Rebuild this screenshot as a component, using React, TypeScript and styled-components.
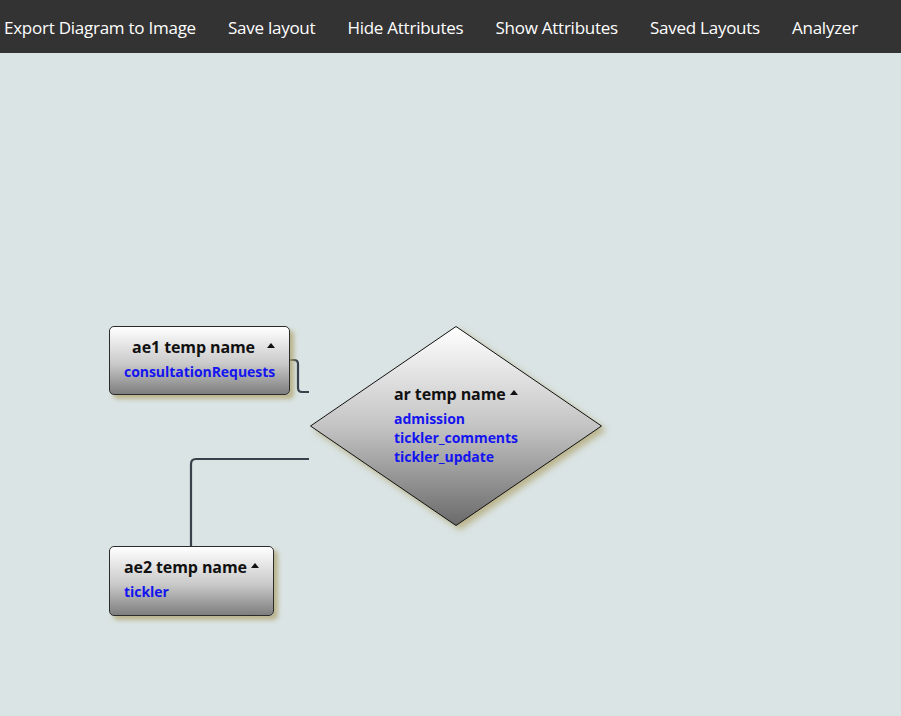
import React from "react";
import styled, { createGlobalStyle } from "styled-components";

const Global = createGlobalStyle`
  html, body { margin: 0; padding: 0; }
  body {
    background: #dae4e4;
    font-family: "Open Sans", "Noto Sans", sans-serif;
    overflow: hidden;
  }
`;

const NAV_H = 53;

const NavBar = styled.nav`
  height: ${NAV_H}px;
  background: #333333;
  display: flex;
  align-items: center;
  gap: 32px;
  padding: 3px 0 0 4px;
  box-sizing: border-box;
`;

const NavItem = styled.a`
  color: #ffffff;
  font-family: "Open Sans", "Noto Sans", sans-serif;
  font-size: 17px;
  letter-spacing: -0.25px;
  line-height: 22px;
  white-space: nowrap;
  cursor: pointer;
`;

const Canvas = styled.div`
  position: relative;
  height: ${716 - NAV_H}px;
  background: #dae4e4;
`;

const Wires = styled.svg`
  position: absolute;
  left: 0;
  top: 0;
  width: 100%;
  height: 100%;
  overflow: visible;
`;

const Entity = styled.div<{ $x: number; $y: number; $h: number }>`
  position: absolute;
  left: ${(p) => p.$x}px;
  top: ${(p) => p.$y}px;
  height: ${(p) => p.$h}px;
  box-sizing: border-box;
  padding: 8px 14px 0 14px;
  border: 1px solid #2b2b2b;
  border-radius: 5px;
  background: linear-gradient(to bottom, #ffffff 0%, #c9c9c9 55%, #7e7e7e 100%);
  box-shadow: 4px 4px 4px rgba(176, 164, 112, 0.75);
`;

const HeaderRow = styled.div`
  display: flex;
  align-items: flex-start;
  height: 27px;
`;

const Title = styled.div`
  flex: 1;
  text-align: center;
  font-family: "Open Sans", "Noto Sans", sans-serif;
  font-weight: 700;
  font-size: 16px;
  letter-spacing: -0.1px;
  line-height: 24px;
  color: #111111;
  white-space: nowrap;
`;

const Caret = styled.span`
  width: 0;
  height: 0;
  margin: 8px 0 0 4px;
  border-left: 4px solid transparent;
  border-right: 4px solid transparent;
  border-bottom: 5px solid #111111;
`;

const Attr = styled.div`
  font-family: "Open Sans", "Noto Sans", sans-serif;
  font-weight: 700;
  font-size: 14px;
  letter-spacing: -0.05px;
  line-height: 19px;
  color: #1414f0;
  white-space: nowrap;
`;

const Relation = styled.div<{ $x: number; $y: number }>`
  position: absolute;
  left: ${(p) => p.$x}px;
  top: ${(p) => p.$y}px;
  width: 292px;
  height: 200px;
`;

const DiamondShape = styled.svg`
  position: absolute;
  left: 0;
  top: 0;
  filter: drop-shadow(4px 4px 3px rgba(176, 164, 112, 0.75));
`;

const RelationBody = styled.div`
  position: absolute;
  left: 84px;
  top: 56px;
`;

const RelHeader = styled.div`
  display: flex;
  align-items: flex-start;
  height: 27px;
`;

const RelTitle = styled(Title)`
  flex: none;
  text-align: left;
`;

function App() {
  return (
    <>
      <Global />
      <NavBar>
        <NavItem>Export Diagram to Image</NavItem>
        <NavItem>Save layout</NavItem>
        <NavItem>Hide Attributes</NavItem>
        <NavItem>Show Attributes</NavItem>
        <NavItem>Saved Layouts</NavItem>
        <NavItem>Analyzer</NavItem>
      </NavBar>
      <Canvas>
        <Wires>
          <g fill="none" stroke="#36414b" strokeWidth={2.2}>
            <path d={`M289 ${360 - NAV_H} H294 Q298 ${360 - NAV_H} 298 ${364 - NAV_H} V${388 - NAV_H} Q298 ${392 - NAV_H} 302 ${392 - NAV_H} H309`} />
            <path d={`M309 ${459 - NAV_H} H196 Q191 ${459 - NAV_H} 191 ${464 - NAV_H} V${546 - NAV_H}`} />
          </g>
        </Wires>
        <Entity $x={109} $y={326 - NAV_H} $h={69}>
          <HeaderRow>
            <Title>ae1 temp name</Title>
            <Caret />
          </HeaderRow>
          <Attr>consultationRequests</Attr>
        </Entity>
        <Relation $x={310} $y={326 - NAV_H}>
          <DiamondShape width="300" height="210" viewBox="0 0 300 210">
            <defs>
              <linearGradient id="relgrad" x1="0" y1="0" x2="0" y2="1">
                <stop offset="0" stopColor="#ffffff" />
                <stop offset="0.5" stopColor="#c4c4c4" />
                <stop offset="1" stopColor="#6a6a6a" />
              </linearGradient>
            </defs>
            <polygon
              points="146,0.5 291.5,100 146,199.5 0.5,100"
              fill="url(#relgrad)"
              stroke="#111111"
              strokeWidth={1}
            />
          </DiamondShape>
          <RelationBody>
            <RelHeader>
              <RelTitle>ar temp name</RelTitle>
              <Caret />
            </RelHeader>
            <Attr>admission</Attr>
            <Attr>tickler_comments</Attr>
            <Attr>tickler_update</Attr>
          </RelationBody>
        </Relation>
        <Entity $x={109} $y={546 - NAV_H} $h={70}>
          <HeaderRow>
            <Title>ae2 temp name</Title>
            <Caret />
          </HeaderRow>
          <Attr>tickler</Attr>
        </Entity>
      </Canvas>
    </>
  );
}

export default App;
